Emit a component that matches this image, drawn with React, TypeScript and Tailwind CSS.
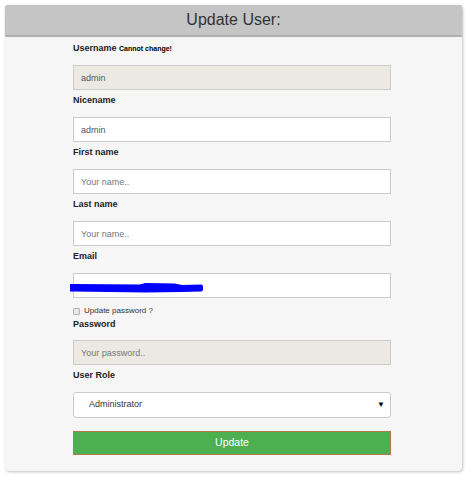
import React from 'react';

const font = { fontFamily: '"Liberation Sans", Arial, sans-serif' };

const Label: React.FC<{ children: React.ReactNode }> = ({ children }) => (
    <div className="h-[14px] leading-[14px] text-[9px] font-bold text-[#222] mt-[3px] mb-[10px]">{children}</div>
);

const Input: React.FC<{ value?: string; placeholder?: string; disabled?: boolean }> = ({ value, placeholder, disabled }) => (
    <input
        readOnly
        disabled={disabled}
        defaultValue={value}
        placeholder={placeholder}
        className={`block w-full h-[25px] border border-[#cccccc] px-[7px] text-[9px] text-[#555] placeholder:text-[#777] outline-none ${
            disabled ? 'bg-[#ebe9e2]' : 'bg-white'
        }`}
        style={font}
    />
);

export default function App() {
    return (
        <div className="w-[471px] h-[479px] bg-white pt-[5px] pl-[5px]" style={font}>
            <div className="w-[457px] h-[466px] bg-[#f6f6f6] rounded-[4px] shadow-[1px_1px_3px_rgba(0,0,0,0.25)] flex flex-col">
                {/* Header */}
                <div className="h-[30px] bg-[#c5c5c5] rounded-t-[2px] shadow-[0_2px_1px_rgba(0,0,0,0.3)] flex items-center justify-center">
                    <span className="text-[16px] text-[#333]">Update User:</span>
                </div>

                {/* Form */}
                <div className="ml-[68px] w-[318px] pt-[3px]">
                    <div className="h-[14px] leading-[14px] text-[9px] font-bold text-[#222] mt-[3px] mb-[10px]">
                        Username <span className="text-[7px] text-black">Cannot change!</span>
                    </div>
                    <Input value="admin" disabled />

                    <Label>Nicename</Label>
                    <Input value="admin" />

                    <Label>First name</Label>
                    <Input placeholder="Your name.." />

                    <Label>Last name</Label>
                    <Input placeholder="Your name.." />

                    <Label>Email</Label>
                    <div className="relative">
                        <Input />
                        <svg className="absolute left-[-3px] top-[8px]" width="134" height="12" viewBox="0 0 134 12">
                            <path
                                d="M1 5 L70 5.5 L76 4 L104 4.5 L112 6 L131 5.5 L131 8.5 L112 9 L76 9.5 L1 8.5 Z"
                                stroke="#0000ff"
                                strokeWidth="4"
                                fill="#0000ff"
                                strokeLinejoin="round"
                            />
                        </svg>
                    </div>

                    <div className="flex items-center h-[12px] mt-[7px] gap-[4px]">
                        <span className="w-[7px] h-[7px] border border-[#b5b5b5] bg-[#e8e8e8] rounded-[1px]" />
                        <span className="text-[8px] text-[#333]">Update password ?</span>
                    </div>
                    <div className="h-[14px] leading-[14px] text-[9px] font-bold text-[#222] mb-[9px]">Password</div>
                    <Input placeholder="Your password.." disabled />

                    <Label>User Role</Label>
                    <div className="relative h-[26px] bg-white border border-[#cccccc] rounded-[3px] flex items-center pl-[15px]">
                        <span className="text-[9px] text-[#333]">Administrator</span>
                        <span className="absolute right-[5px] top-[8px] text-[8px] leading-[8px] text-black">▼</span>
                    </div>

                    <button className="mt-[13px] w-full h-[24px] bg-[#4caf50] border border-[#b07a4a] text-white text-[10.5px] flex items-center justify-center">
                        Update
                    </button>
                </div>
            </div>
        </div>
    );
}
